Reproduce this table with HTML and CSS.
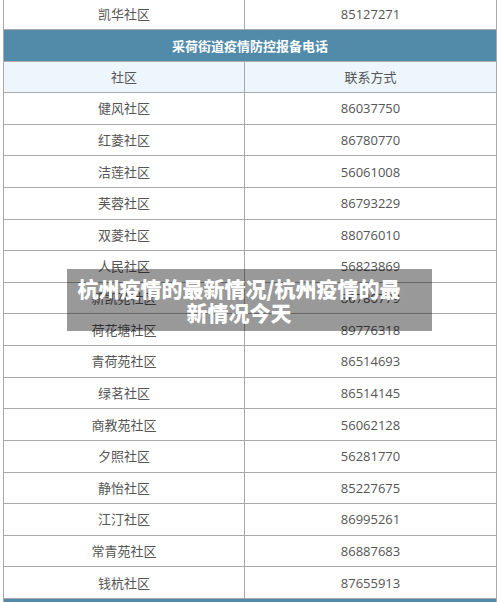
FILE: index.html
```html
<!DOCTYPE html>
<html lang="zh-CN">
<head>
<meta charset="utf-8">
<link rel="stylesheet" href="styles.css">
</head>
<body>
<div class="page">
  <table class="phones">
    <tr class="row first"><td>凯华社区</td><td>85127271</td></tr>
    <tr class="title"><td colspan="2">采荷街道疫情防控报备电话</td></tr>
    <tr class="sub"><td>社区</td><td>联系方式</td></tr>
    <tr class="row"><td>健风社区</td><td>86037750</td></tr>
    <tr class="row"><td>红菱社区</td><td>86780770</td></tr>
    <tr class="row"><td>洁莲社区</td><td>56061008</td></tr>
    <tr class="row"><td>芙蓉社区</td><td>86793229</td></tr>
    <tr class="row"><td>双菱社区</td><td>88076010</td></tr>
    <tr class="row"><td>人民社区</td><td>56823869</td></tr>
    <tr class="row"><td>新凯苑社区</td><td>86780779</td></tr>
    <tr class="row"><td>荷花塘社区</td><td>89776318</td></tr>
    <tr class="row"><td>青荷苑社区</td><td>86514693</td></tr>
    <tr class="row"><td>绿茗社区</td><td>86514145</td></tr>
    <tr class="row"><td>商教苑社区</td><td>56062128</td></tr>
    <tr class="row"><td>夕照社区</td><td>56281770</td></tr>
    <tr class="row"><td>静怡社区</td><td>85227675</td></tr>
    <tr class="row"><td>江汀社区</td><td>86995261</td></tr>
    <tr class="row"><td>常青苑社区</td><td>86887683</td></tr>
    <tr class="row"><td>钱杭社区</td><td>87655913</td></tr>
    <tr class="title"><td colspan="2">&nbsp;</td></tr>
  </table>
  <div class="caption">杭州疫情的最新情况/杭州疫情的最<br>新情况今天</div>
</div>
</body>
</html>
```

FILE: styles.css
```css
html, body {
  margin: 0;
  padding: 0;
  background: #ffffff;
  overflow: hidden;
}
.page {
  position: relative;
  width: 500px;
  height: 602px;
  overflow: hidden;
  padding-left: 3px;
  box-sizing: border-box;
}
.phones {
  border-collapse: collapse;
  width: 494px;
  margin-top: -3px;
  table-layout: fixed;
  font-family: "Open Sans", "Noto Sans CJK SC", sans-serif;
  font-size: 13px;
  color: #555555;
}
.phones td {
  border: 1px solid #a8a8a8;
  text-align: center;
  padding: 0;
  line-height: 16px;
}
.phones td:first-child {
  width: 240px;
}
.row td {
  height: 30.625px;
  background: #ffffff;
}
.first td {
  height: 31px;
}
.title td {
  height: 31px;
  background: #528aaa;
  color: #ffffff;
  font-weight: 700;
  font-family: "Noto Sans CJK SC", sans-serif;
}
.sub td {
  height: 30px;
  background: #eef6fd;
}
.caption {
  position: absolute;
  left: 67px;
  top: 269px;
  width: 365px;
  height: 62px;
  box-sizing: border-box;
  padding: 7px 21px 0 0;
  background: rgba(0, 0, 0, 0.4);
  color: #ffffff;
  font-family: "Noto Sans CJK SC", sans-serif;
  font-weight: 900;
  font-size: 21px;
  line-height: 24px;
  text-align: center;
  white-space: nowrap;
}
```
